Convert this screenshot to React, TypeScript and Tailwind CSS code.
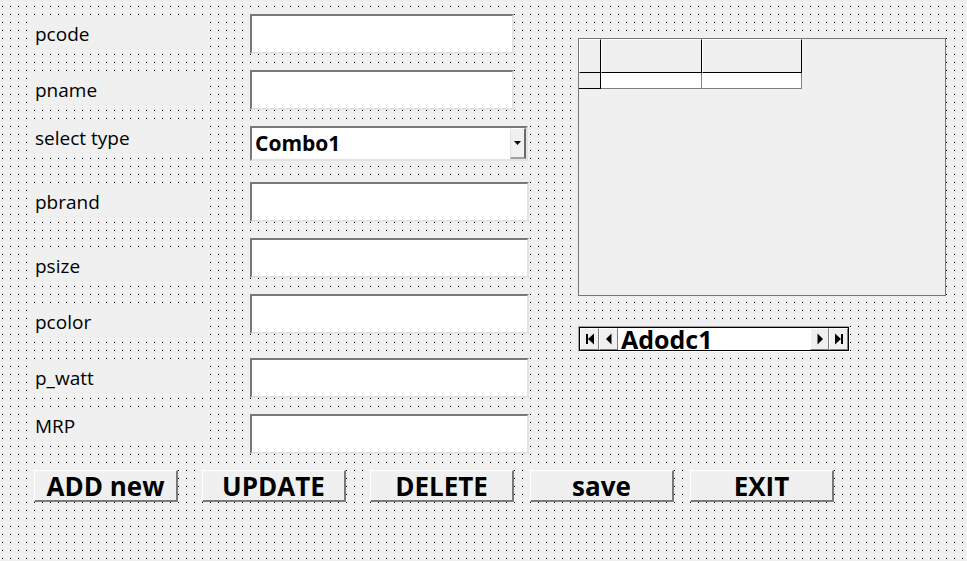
import React from "react";

type Field = {
  label: string;
  rowH: string;
  labelMt: string;
  inputMt: string;
  inputW: string;
  combo?: boolean;
};

const fields: Field[] = [
  { label: "pcode", rowH: "h-14", labelMt: "mt-1", inputMt: "mt-0", inputW: "w-[264px]" },
  { label: "pname", rowH: "h-13", labelMt: "mt-1", inputMt: "mt-0", inputW: "w-[264px]" },
  { label: "select type", rowH: "h-15", labelMt: "mt-0", inputMt: "mt-1", inputW: "w-[278px]", combo: true },
  { label: "pbrand", rowH: "h-14", labelMt: "mt-1", inputMt: "mt-0", inputW: "w-[279px]" },
  { label: "psize", rowH: "h-14", labelMt: "mt-3", inputMt: "mt-0", inputW: "w-[279px]" },
  { label: "pcolor", rowH: "h-16", labelMt: "mt-3", inputMt: "mt-0", inputW: "w-[279px]" },
  { label: "p_watt", rowH: "h-13", labelMt: "mt-1", inputMt: "mt-0", inputW: "w-[279px]" },
  { label: "MRP", rowH: "h-15", labelMt: "mt-0", inputMt: "mt-1", inputW: "w-[279px]" },
];

const sunken =
  "border-2 border-t-[#787878] border-l-[#787878] border-b-[#e3e3e3] border-r-[#e3e3e3] bg-white";

function TextBox({ width, mt }: { width: string; mt: string }) {
  return <div className={`h-10 ${width} ${mt} ${sunken}`} />;
}

function Combo({ width, mt }: { width: string; mt: string }) {
  return (
    <div className={`flex h-[35px] ${width} ${mt} ${sunken}`}>
      <div className="flex flex-1 items-center pl-[3px] text-[21px] font-bold leading-none text-black">
        Combo1
      </div>
      <div className="flex w-4 items-center justify-center border-t border-l border-r-2 border-b-2 border-t-white border-l-[#e3e3e3] border-r-[#696969] border-b-[#a0a0a0] bg-[#f0f0f0]">
        <svg width="7" height="4" viewBox="0 0 7 4">
          <polygon points="0,0 7,0 3.5,4" fill="#000" />
        </svg>
      </div>
    </div>
  );
}

function NavBtn({ kind }: { kind: "first" | "prev" | "next" | "last" }) {
  return (
    <div className="flex h-full w-[19px] shrink-0 items-center justify-center border-t border-l border-b border-r border-t-white border-l-white border-b-[#808080] border-r-[#808080] bg-[#f0f0f0]">
      <svg width="10" height="12" viewBox="0 0 10 12" className="shrink-0">
        {kind === "first" && (
          <>
            <rect x="1" y="1" width="2" height="10" fill="#000" />
            <polygon points="9,0.5 9,11.5 3,6" fill="#000" />
          </>
        )}
        {kind === "prev" && <polygon points="7.5,0.5 7.5,11.5 2,6" fill="#000" />}
        {kind === "next" && <polygon points="2.5,0.5 2.5,11.5 8,6" fill="#000" />}
        {kind === "last" && (
          <>
            <polygon points="1,0.5 1,11.5 7,6" fill="#000" />
            <rect x="7" y="1" width="2" height="10" fill="#000" />
          </>
        )}
      </svg>
    </div>
  );
}

function CmdButton({ text, className = "" }: { text: string; className?: string }) {
  return (
    <div
      className={`flex h-8 w-[144px] items-center justify-center border-t border-l border-r-2 border-b-2 border-t-white border-l-white border-r-[#7a7a7a] border-b-[#7a7a7a] bg-[#f0f0f0] text-[26px] font-bold leading-none text-black ${className}`}
    >
      {text}
    </div>
  );
}

export default function App() {
  return (
    <div className="min-h-screen w-full bg-[#f0f0f0] bg-[image:conic-gradient(at_1px_1px,transparent_270deg,#000_0)] bg-[size:8px_8px] bg-[position:2px_6px] pt-[14px] font-['Open_Sans',sans-serif]">
      <div className="flex">
        {/* labels and inputs */}
        <div className="flex w-[502px] flex-col pl-[27px] box-content">
          {fields.map((f) => (
            <div key={f.label} className={`flex items-start ${f.rowH}`}>
              <div
                className={`flex h-8 w-[181px] items-center bg-[#f0f0f0] pl-2 text-[19px] leading-none text-black ${f.labelMt}`}
              >
                {f.label}
              </div>
              <div className="ml-[42px]">
                {f.combo ? (
                  <Combo width={f.inputW} mt={f.inputMt} />
                ) : (
                  <TextBox width={f.inputW} mt={f.inputMt} />
                )}
              </div>
            </div>
          ))}
        </div>

        {/* datagrid + adodc */}
        <div className="ml-[49px] mt-6 flex flex-col">
          <div className="h-[258px] w-[368px] border border-[#767676] bg-[#f0f0f0]">
            <div className="flex">
              <div className="h-[34px] w-[22px] border-t border-l border-r border-b border-t-white border-l-white border-r-black border-b-black" />
              <div className="h-[34px] w-[101px] border-t border-l border-r border-b border-t-white border-l-white border-r-black border-b-black" />
              <div className="h-[34px] w-[100px] border-t border-l border-r border-b border-t-white border-l-white border-r-black border-b-black" />
            </div>
            <div className="flex">
              <div className="h-4 w-[22px] border-r border-b border-black bg-[#f0f0f0]" />
              <div className="h-4 w-[101px] border-r border-b border-[#808080] bg-white" />
              <div className="h-4 w-[100px] border-r border-b border-[#808080] bg-white" />
            </div>
          </div>

          <div className="mt-[30px] flex h-[26px] w-[272px] border border-t-[#a0a0a0] border-l-[#a0a0a0] border-b-white border-r-white">
            <div className="flex flex-1 border border-black">
              <NavBtn kind="first" />
              <NavBtn kind="prev" />
              <div className="flex flex-1 items-center bg-white pl-[3px] text-[25px] font-bold leading-none text-black">
                Adodc1
              </div>
              <NavBtn kind="next" />
              <NavBtn kind="last" />
            </div>
          </div>
        </div>
      </div>

      <div className="flex pl-[34px]">
        <CmdButton text="ADD new" />
        <CmdButton text="UPDATE" className="ml-6" />
        <CmdButton text="DELETE" className="ml-6" />
        <CmdButton text="save" className="ml-4" />
        <CmdButton text="EXIT" className="ml-4" />
      </div>
    </div>
  );
}
